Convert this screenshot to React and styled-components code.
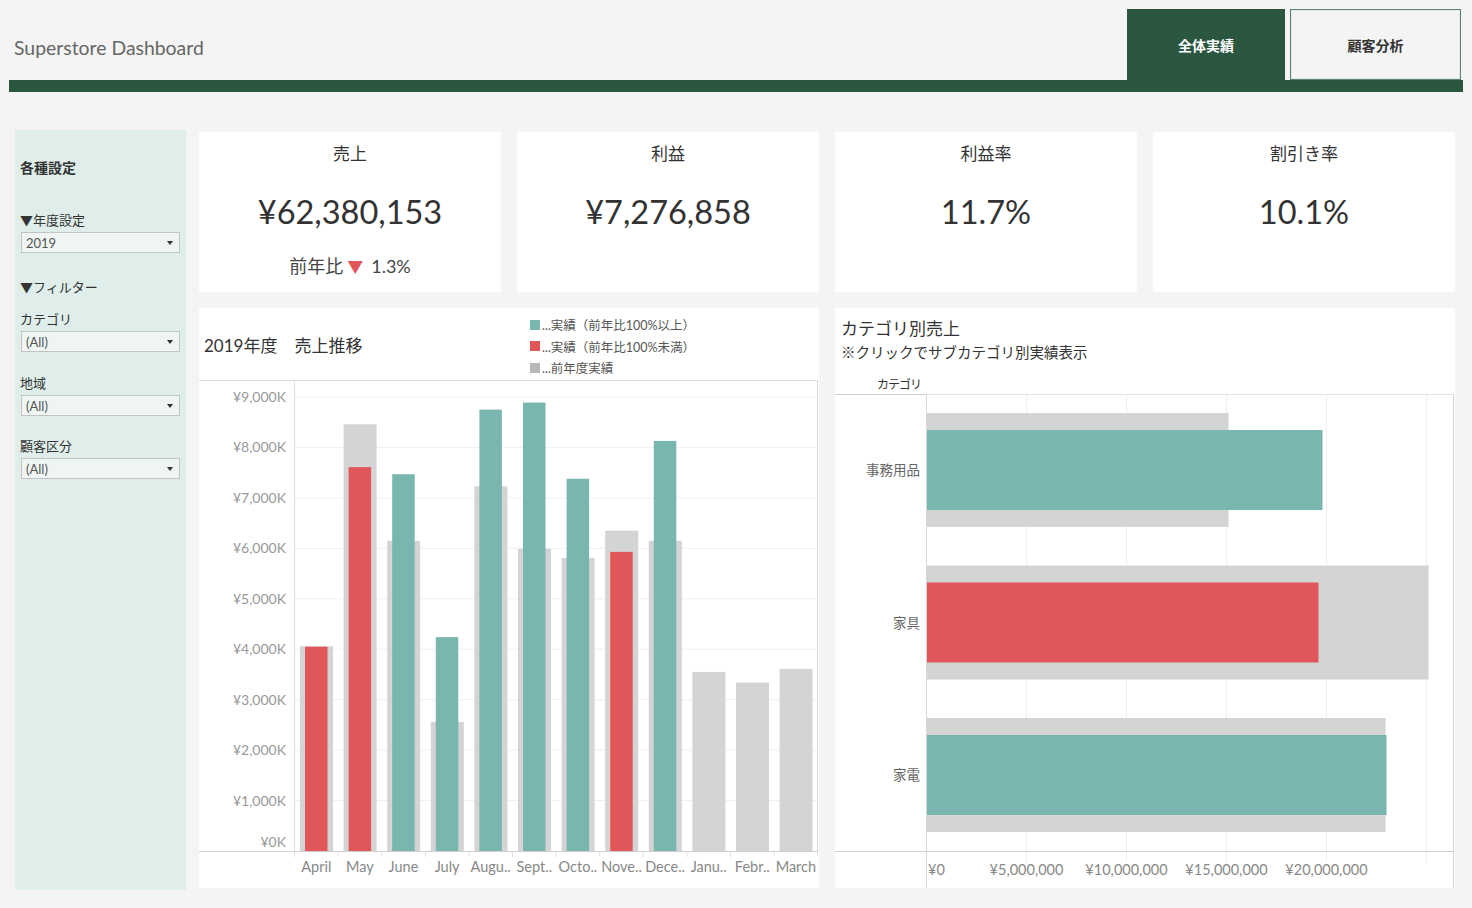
import React from 'react'
import styled, { createGlobalStyle } from 'styled-components'

const FONT = 'Lato, "Noto Sans CJK JP", sans-serif'
const TEAL = '#79b6af'
const RED = '#e15759'
const GRAY = '#d4d4d4'

const GlobalStyle = createGlobalStyle`
  body {
    margin: 0;
    background: #f4f4f4;
    font-family: ${FONT};
  }
`

const Page = styled.div`
  width: 1472px;
  height: 908px;
  overflow: hidden;
  background: #f4f4f4;
`

const Header = styled.header`
  display: flex;
  height: 80px;
`

const Title = styled.h1`
  margin: 0;
  padding: 14px 0 0 14px;
  display: flex;
  align-items: center;
  font-size: 19.4px;
  font-weight: 400;
  color: #666;
`

const Tabs = styled.nav`
  margin-left: auto;
  display: flex;
  gap: 5px;
  padding: 9px 11px 0 0;
`

const Tab = styled.div`
  box-sizing: border-box;
  width: ${p => (p.$active ? 158 : 171)}px;
  height: 71px;
  display: flex;
  align-items: center;
  justify-content: center;
  font-size: 14px;
  font-weight: 700;
  background: ${p => (p.$active ? '#2b5640' : '#f4f4f4')};
  color: ${p => (p.$active ? '#fff' : '#333')};
  border: ${p => (p.$active ? 'none' : '1px solid #5e8270')};
  box-shadow: ${p => (p.$active ? 'none' : 'inset 0 0 0 1px #e2e9e5')};
`

const GreenBar = styled.div`
  height: 12px;
  margin: 0 9px;
  background: #2b5640;
`

const Body = styled.div`
  display: flex;
  gap: 13px;
  padding: 38px 17px 0 15px;
`

const Sidebar = styled.aside`
  box-sizing: border-box;
  width: 172px;
  height: 760px;
  background: #dfeeea;
  padding: 28px 6px 0 5px;
  display: flex;
  flex-direction: column;
`

const SideHeading = styled.div`
  font-size: 14px;
  font-weight: 700;
  line-height: 20px;
  color: #333;
`

const SideLabel = styled.div`
  margin-top: ${p => p.$gap}px;
  font-size: 13px;
  line-height: 18px;
  color: #333;
`

const Select = styled.div`
  box-sizing: border-box;
  margin: 3px 0 0 1px;
  height: 21px;
  display: flex;
  align-items: center;
  justify-content: space-between;
  padding: 0 6px 0 4px;
  background: #eef5f3;
  border: 1px solid #c4c4c4;
  font-size: 13px;
  color: #555;

  &::after {
    content: '';
    border-left: 3.5px solid transparent;
    border-right: 3.5px solid transparent;
    border-top: 4px solid #333;
  }
`

const Main = styled.main`
  margin-top: 2px;
  display: grid;
  grid-template-columns: repeat(4, 302px);
  grid-template-rows: 160px 580px;
  gap: 16px;
`

const Card = styled.section`
  background: #fff;
  grid-column: span ${p => p.$span || 1};
`

const Kpi = styled(Card)`
  display: flex;
  flex-direction: column;
  align-items: center;
  padding-top: 12px;
  color: #333;
`

const KpiTitle = styled.div`
  font-size: 17px;
  line-height: 20px;
`

const KpiValue = styled.div`
  margin-top: 28px;
  font-size: 32.5px;
  line-height: 40px;
  color: #333;
`

const KpiSub = styled.div`
  margin-top: 22px;
  font-size: 18px;
  line-height: 24px;
  color: #444;
`

const Down = styled.span`
  color: ${RED};
  font-size: 16px;
  margin: 0 8px 0 4px;
`

const ChartHead = styled.div`
  height: 72px;
  display: grid;
  grid-template-columns: 331px auto;
  align-items: center;
`

const ChartTitle = styled.div`
  font-size: 17px;
  color: #333;
  padding-left: 5px;
`

const Legend = styled.ul`
  margin: 0;
  padding: 0;
  list-style: none;
  align-self: start;
  padding-top: 6px;
`

const LegendItem = styled.li`
  display: flex;
  align-items: center;
  height: 21.5px;
  font-size: 12.5px;
  color: #555;

  &::before {
    content: '';
    width: 10px;
    height: 10px;
    margin-right: 2px;
    background: ${p => p.$color};
  }
`

const CatHead = styled.div`
  height: 86px;
  display: flex;
  flex-direction: column;
`

const CatTitle = styled.div`
  padding: 11px 0 0 6px;
  font-size: 17px;
  line-height: 20px;
  color: #333;
`

const CatNote = styled.div`
  padding: 4px 0 0 6px;
  font-size: 14.5px;
  line-height: 20px;
  color: #333;
`

const CatColumn = styled.div`
  width: 86px;
  margin-top: 14px;
  text-align: right;
  font-size: 12px;
  line-height: 16px;
  color: #333;
  letter-spacing: -1px;
`

const Svg = styled.svg`
  display: block;
  font-family: ${FONT};
`

const months = [
  ['April', 4.06, 4.05, RED],
  ['May', 8.46, 7.61, RED],
  ['June', 6.15, 7.47, TEAL],
  ['July', 2.56, 4.24, TEAL],
  ['Augu..', 7.23, 8.75, TEAL],
  ['Sept..', 5.99, 8.89, TEAL],
  ['Octo..', 5.81, 7.38, TEAL],
  ['Nove..', 6.35, 5.93, RED],
  ['Dece..', 6.15, 8.13, TEAL],
  ['Janu..', 3.55, null, null],
  ['Febr..', 3.34, null, null],
  ['March', 3.61, null, null],
]

function SalesTrend() {
  const zero = 471
  const k = 50.44
  const ax = 95.5
  const band = 43.6
  const y = v => zero - v * k
  const ticks = [0, 1, 2, 3, 4, 5, 6, 7, 8, 9]
  return (
    <Svg width="619" height="508">
      {ticks.slice(1).map(t => (
        <line key={t} x1={ax} x2="618" y1={y(t)} y2={y(t)} stroke="#f0f0f0" />
      ))}
      {ticks.map(t => (
        <text key={t} x="87" y={y(t) + 5 - (t === 0 ? 9 : 0)} textAnchor="end" fontSize="14" fill="#999">
          {t === 0 ? '¥0K' : `¥${t},000K`}
        </text>
      ))}
      {months.map(([m, prev, cur, col], i) => {
        const x0 = ax + i * band
        return (
          <g key={m}>
            <rect x={x0 + 5.5} y={y(prev)} width="33" height={zero - y(prev)} fill={GRAY} />
            {cur && <rect x={x0 + 10.5} y={y(cur)} width="22.5" height={zero - y(cur)} fill={col} />}
            <line x1={x0 + band} x2={x0 + band} y1={zero} y2={zero + 6} stroke="#e2e2e2" />
            <text x={x0 + band / 2} y="492" textAnchor="middle" fontSize="14.5" fill="#888">{m}</text>
          </g>
        )
      })}
      <line x1="0" x2="619" y1="0.5" y2="0.5" stroke="#dedede" />
      <line x1={ax} x2={ax} y1="0" y2="477" stroke="#dedede" />
      <line x1="618.5" x2="618.5" y1="0" y2={zero} stroke="#d8d8d8" />
      <line x1="0" x2="619" y1={zero + 0.5} y2={zero + 0.5} stroke="#cfcfcf" />
    </Svg>
  )
}

const categories = [
  ['事務用品', 15.1, 19.8, TEAL],
  ['家具', 25.1, 19.6, RED],
  ['家電', 22.95, 23.0, TEAL],
]

function CategorySales() {
  const ax = 91.5
  const base = 457.5
  const x = v => ax + v * 20
  return (
    <Svg width="620" height="494">
      {[1, 2, 3, 4, 5].map(g => (
        <line key={g} x1={ax + g * 100} x2={ax + g * 100} y1="0" y2="468" stroke="#efefef" />
      ))}
      {categories.map(([name, prev, cur, col], i) => {
        const top = 19 + i * 152.5
        return (
          <g key={name}>
            <rect x={ax} y={top} width={x(prev) - ax} height="114" fill={GRAY} />
            <rect x={ax} y={top + 17} width={x(cur) - ax} height="80" fill={col} />
            <text x="85" y={top + 62} textAnchor="end" fontSize="13.5" fill="#666">{name}</text>
          </g>
        )
      })}
      <text x="93" y="481" fontSize="14.5" fill="#888">¥0</text>
      {[5, 10, 15, 20].map((v, i) => (
        <text key={v} x={ax + (i + 1) * 100} y="481" textAnchor="middle" fontSize="14.5" fill="#888">
          ¥{v},000,000
        </text>
      ))}
      <line x1="0" x2={ax} y1="0.5" y2="0.5" stroke="#cfcfcf" />
      <line x1={ax} x2="619" y1="0.5" y2="0.5" stroke="#e4e4e4" />
      <line x1={ax} x2={ax} y1="0" y2="494" stroke="#d8d8d8" />
      <line x1="618.5" x2="618.5" y1="0" y2="494" stroke="#d8d8d8" />
      <line x1="0" x2="619" y1={base} y2={base} stroke="#cfcfcf" />
    </Svg>
  )
}

export default function App() {
  return (
    <Page>
      <GlobalStyle />
      <Header>
        <Title>Superstore Dashboard</Title>
        <Tabs>
          <Tab $active>全体実績</Tab>
          <Tab>顧客分析</Tab>
        </Tabs>
      </Header>
      <GreenBar />
      <Body>
        <Sidebar>
          <SideHeading>各種設定</SideHeading>
          <SideLabel $gap={33}>▼年度設定</SideLabel>
          <Select>2019</Select>
          <SideLabel $gap={25}>▼フィルター</SideLabel>
          <SideLabel $gap={14}>カテゴリ</SideLabel>
          <Select>(All)</Select>
          <SideLabel $gap={22}>地域</SideLabel>
          <Select>(All)</Select>
          <SideLabel $gap={21}>顧客区分</SideLabel>
          <Select>(All)</Select>
        </Sidebar>
        <Main>
          <Kpi>
            <KpiTitle>売上</KpiTitle>
            <KpiValue>¥62,380,153</KpiValue>
            <KpiSub>前年比<Down>▼</Down>1.3%</KpiSub>
          </Kpi>
          <Kpi>
            <KpiTitle>利益</KpiTitle>
            <KpiValue>¥7,276,858</KpiValue>
          </Kpi>
          <Kpi>
            <KpiTitle>利益率</KpiTitle>
            <KpiValue>11.7%</KpiValue>
          </Kpi>
          <Kpi>
            <KpiTitle>割引き率</KpiTitle>
            <KpiValue>10.1%</KpiValue>
          </Kpi>
          <Card $span={2}>
            <ChartHead>
              <ChartTitle>2019年度　売上推移</ChartTitle>
              <Legend>
                <LegendItem $color={TEAL}>...実績（前年比100%以上）</LegendItem>
                <LegendItem $color={RED}>...実績（前年比100%未満）</LegendItem>
                <LegendItem $color="#b8b8b8">...前年度実績</LegendItem>
              </Legend>
            </ChartHead>
            <SalesTrend />
          </Card>
          <Card $span={2}>
            <CatHead>
              <CatTitle>カテゴリ別売上</CatTitle>
              <CatNote>※クリックでサブカテゴリ別実績表示</CatNote>
              <CatColumn>カテゴリ</CatColumn>
            </CatHead>
            <CategorySales />
          </Card>
        </Main>
      </Body>
    </Page>
  )
}
